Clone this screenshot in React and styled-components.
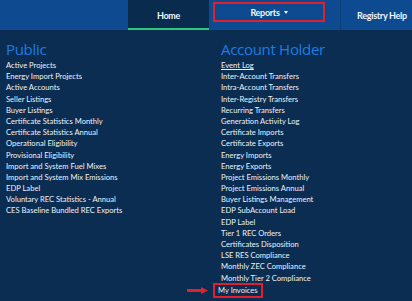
import React from "react";
import styled, { createGlobalStyle } from "styled-components";

const Global = createGlobalStyle`
  html, body { margin: 0; padding: 0; background: #0b2d52; }
  body { font-family: Lato, "Open Sans", sans-serif; overflow: hidden; }
`;

const Page = styled.div`
  width: 412px;
  height: 301px;
  background: #0b2d52;
  overflow: hidden;
`;

const NavBar = styled.nav`
  display: flex;
  height: 30px;
  background: #0d4a90;
  overflow: hidden;
`;

const NavSpacer = styled.div`
  flex: 1;
`;

const NavTab = styled.div`
  position: relative;
  display: flex;
  align-items: ${(p) => (p.$top ? "flex-start" : "center")};
  justify-content: ${(p) => p.$justify || "center"};
  width: ${(p) => p.$w}px;
  flex: none;
  height: 30px;
  box-sizing: border-box;
  padding: ${(p) => p.$pad || "0"};
  background: ${(p) => (p.$active ? "#082b4e" : "transparent")};
  border-left: ${(p) => (p.$divider ? "1px solid #0a3f7c" : "none")};
  color: #f2f5fa;
  font-weight: 700;
  font-size: 9px;
  letter-spacing: -0.3px;
  white-space: nowrap;
  &::after {
    content: "";
    display: ${(p) => (p.$active ? "block" : "none")};
    position: absolute;
    left: 0;
    right: 0;
    bottom: 0;
    height: 2px;
    background: #2fc67a;
  }
`;

const Highlight = styled.div`
  display: flex;
  align-items: center;
  justify-content: center;
  gap: 4px;
  width: 112px;
  height: 20px;
  box-sizing: border-box;
  border: 2px solid #e0202c;
`;

const Caret = styled.span`
  width: 0;
  height: 0;
  border-left: 2.5px solid transparent;
  border-right: 2.5px solid transparent;
  border-top: 3px solid #f2f5fa;
  margin-top: 1px;
`;

const Columns = styled.div`
  display: grid;
  grid-template-columns: 215px 1fr;
  padding: 10px 0 0 6px;
`;

const Column = styled.div`
  display: flex;
  flex-direction: column;
`;

const Heading = styled.h2`
  margin: 0 0 1px;
  font-family: "Open Sans", Lato, sans-serif;
  font-weight: 400;
  font-size: 15px;
  line-height: 19px;
  color: #1f7be2;
  letter-spacing: -0.3px;
`;

const Item = styled.div`
  position: relative;
  align-self: flex-start;
  font-size: 7.6px;
  line-height: 11.2px;
  height: 11.2px;
  color: #eef2f7;
  white-space: nowrap;
  text-decoration: ${(p) => (p.$underline ? "underline" : "none")};
  ${(p) =>
    p.$boxed &&
    `
    outline: 2px solid #e0202c;
    outline-offset: 0px;
    padding: 0 3px;
    margin-left: -6px;
    margin-top: 1px;
  `}
`;

const Arrow = styled.svg`
  position: absolute;
  left: -28px;
  top: 2px;
`;

const publicItems = [
  "Active Projects",
  "Energy Import Projects",
  "Active Accounts",
  "Seller Listings",
  "Buyer Listings",
  "Certificate Statistics Monthly",
  "Certificate Statistics Annual",
  "Operational Eligibility",
  "Provisional Eligibility",
  "Import and System Fuel Mixes",
  "Import and System Mix Emissions",
  "EDP Label",
  "Voluntary REC Statistics - Annual",
  "CES Baseline Bundled REC Exports",
];

const accountItems = [
  "Event Log",
  "Inter-Account Transfers",
  "Intra-Account Transfers",
  "Inter-Registry Transfers",
  "Recurring Transfers",
  "Generation Activity Log",
  "Certificate Imports",
  "Certificate Exports",
  "Energy Imports",
  "Energy Exports",
  "Project Emissions Monthly",
  "Project Emissions Annual",
  "Buyer Listings Management",
  "EDP SubAccount Load",
  "EDP Label",
  "Tier 1 REC Orders",
  "Certificates Disposition",
  "LSE RES Compliance",
  "Monthly ZEC Compliance",
  "Monthly Tier 2 Compliance",
];

export default function App() {
  return (
    <Page>
      <Global />
      <NavBar>
        <NavSpacer />
        <NavTab $w={81} $active>Home</NavTab>
        <NavTab $w={131} $top $justify="flex-start" $pad="2px 0 0 4px">
          <Highlight>
            Reports <Caret />
          </Highlight>
        </NavTab>
        <NavTab $w={72} $divider $justify="flex-start" $pad="0 0 0 16px">
          Registry Help
        </NavTab>
      </NavBar>
      <Columns>
        <Column>
          <Heading>Public</Heading>
          {publicItems.map((t) => (
            <Item key={t}>{t}</Item>
          ))}
        </Column>
        <Column>
          <Heading>Account Holder</Heading>
          {accountItems.map((t, i) => (
            <Item key={t} $underline={i === 0}>{t}</Item>
          ))}
          <Item $boxed>
            <Arrow width="21" height="7" viewBox="0 0 21 7">
              <path d="M0 2 H14 V0 L21 3.5 L14 7 V5 H0 Z" fill="#e3202b" />
            </Arrow>
            My Invoices
          </Item>
        </Column>
      </Columns>
    </Page>
  );
}
